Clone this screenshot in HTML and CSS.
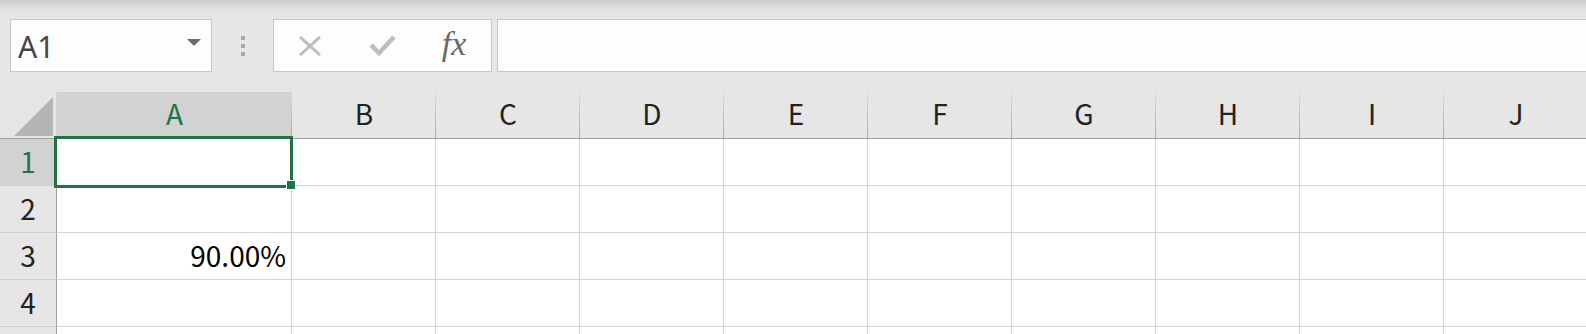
FILE: index.html
```html
<!DOCTYPE html>
<html lang="ja">

<head>
    <meta charset="UTF-8">
    <meta name="viewport" content="width=device-width, initial-scale=1.0">
    <title>Book1 - Excel</title>
    <link rel="stylesheet" href="styles.css">
</head>

<body>
    <div class="formula-row">
        <div class="name-box">
            <span class="name-text">A1</span>
            <span class="name-arrow"></span>
        </div>
        <div class="grip">
            <span></span>
            <span></span>
            <span></span>
        </div>
        <div class="func-box">
            <div class="func-btn">
                <svg width="24" height="20" viewBox="0 0 24 20">
                    <path d="M2 1 L22 19 M22 1 L2 19" stroke="#bdbdbd" stroke-width="3" fill="none" />
                </svg>
            </div>
            <div class="func-btn">
                <svg width="27" height="21" viewBox="0 0 27 21">
                    <path d="M2 10 L10 18 L25 2" stroke="#bdbdbd" stroke-width="4.5" fill="none" />
                </svg>
            </div>
            <div class="func-btn fx">fx</div>
        </div>
        <div class="formula-input"></div>
    </div>

    <div class="sheet">
        <div class="corner"><div class="corner-tri"></div></div>
        <div class="col-head active">A</div>
        <div class="col-head">B</div>
        <div class="col-head">C</div>
        <div class="col-head">D</div>
        <div class="col-head">E</div>
        <div class="col-head">F</div>
        <div class="col-head">G</div>
        <div class="col-head">H</div>
        <div class="col-head">I</div>
        <div class="col-head">J</div>

        <div class="row-head active">1</div>
        <div class="cell selected">
            <div class="selection"></div>
            <div class="fill-handle"></div>
        </div>
        <div class="cell"></div>
        <div class="cell"></div>
        <div class="cell"></div>
        <div class="cell"></div>
        <div class="cell"></div>
        <div class="cell"></div>
        <div class="cell"></div>
        <div class="cell"></div>
        <div class="cell"></div>

        <div class="row-head">2</div>
        <div class="cell"></div>
        <div class="cell"></div>
        <div class="cell"></div>
        <div class="cell"></div>
        <div class="cell"></div>
        <div class="cell"></div>
        <div class="cell"></div>
        <div class="cell"></div>
        <div class="cell"></div>
        <div class="cell"></div>

        <div class="row-head">3</div>
        <div class="cell number">90.00%</div>
        <div class="cell"></div>
        <div class="cell"></div>
        <div class="cell"></div>
        <div class="cell"></div>
        <div class="cell"></div>
        <div class="cell"></div>
        <div class="cell"></div>
        <div class="cell"></div>
        <div class="cell"></div>

        <div class="row-head">4</div>
        <div class="cell"></div>
        <div class="cell"></div>
        <div class="cell"></div>
        <div class="cell"></div>
        <div class="cell"></div>
        <div class="cell"></div>
        <div class="cell"></div>
        <div class="cell"></div>
        <div class="cell"></div>
        <div class="cell"></div>

        <!-- row 5 is only a sliver at the bottom of the window -->
        <div class="row-head"></div>
        <div class="cell"></div>
        <div class="cell"></div>
        <div class="cell"></div>
        <div class="cell"></div>
        <div class="cell"></div>
        <div class="cell"></div>
        <div class="cell"></div>
        <div class="cell"></div>
        <div class="cell"></div>
        <div class="cell"></div>
    </div>
</body>

</html>
```

FILE: styles.css
```css
body {
    margin: 0;
    overflow: hidden;
    height: 334px;
    background: linear-gradient(#cbcbcb 0, #e3e3e3 10px, #e6e6e6 20px);
    font-family: "Noto Sans CJK JP", "Noto Sans", sans-serif;
}

.formula-row {
    display: flex;
    align-items: stretch;
    height: 53px;
    padding: 19px 0 0 10px;
    margin-bottom: 20px;
}

.name-box {
    box-sizing: border-box;
    width: 202px;
    display: flex;
    align-items: center;
    justify-content: space-between;
    padding: 0 10px 0 7px;
    background-color: #fdfdfd;
    border: 1px solid #c6c6c6;
}

.name-text {
    font-family: "Noto Sans", sans-serif;
    font-size: 30px;
    color: #444;
    line-height: 1;
    padding-top: 3px;
}

.name-arrow {
    width: 0;
    height: 0;
    border-left: 7px solid transparent;
    border-right: 7px solid transparent;
    border-top: 7px solid #6b6b6b;
    margin-bottom: 6px;
}

.grip {
    display: flex;
    flex-direction: column;
    justify-content: center;
    gap: 4px;
    margin: 0 28px 0 29px;
}

.grip span {
    width: 4px;
    height: 4px;
    background-color: #a9a9a9;
}

.func-box {
    box-sizing: border-box;
    width: 219px;
    display: flex;
    background-color: #fdfdfd;
    border: 1px solid #c6c6c6;
}

.func-btn {
    width: 72px;
    display: flex;
    align-items: center;
    justify-content: center;
}

.func-btn.fx {
    font-family: "Liberation Serif", serif;
    font-style: italic;
    font-size: 34px;
    color: #666;
    padding-bottom: 4px;
}

.formula-input {
    flex: 1;
    margin-left: 5px;
    background-color: #fdfdfd;
    border: 1px solid #c6c6c6;
    border-right: none;
}

.sheet {
    display: grid;
    grid-template-columns: 57px 235px repeat(9, 144px);
    grid-auto-rows: 47px;
}

.corner,
.col-head,
.row-head,
.cell {
    box-sizing: border-box;
}

.corner {
    display: flex;
    align-items: flex-end;
    justify-content: flex-end;
    padding: 0 3px 2px 0;
    background-color: #e6e6e6;
    border-right: 1px solid #d4d4d4;
    border-bottom: 1px solid #9e9e9e;
}

.corner-tri {
    width: 39px;
    height: 39px;
    background-color: #b5b5b5;
    clip-path: polygon(100% 0, 100% 100%, 0 100%);
}

.col-head {
    display: flex;
    align-items: center;
    justify-content: center;
    padding-bottom: 4px;
    font-size: 28px;
    color: #222;
    background: linear-gradient(#dcdcdc, #a6a6a6) right / 1px 100% no-repeat, #e6e6e6;
    border-bottom: 1px solid #9e9e9e;
}

.col-head.active {
    background: linear-gradient(#dcdcdc, #a6a6a6) right / 1px 100% no-repeat, #d2d2d2;
    color: #217346;
}

.row-head {
    display: flex;
    align-items: center;
    justify-content: center;
    padding-bottom: 2px;
    font-size: 28px;
    color: #222;
    background-color: #e6e6e6;
    border-right: 1px solid #9e9e9e;
    border-bottom: 1px solid #cdcdcd;
}

.row-head.active {
    background-color: #d2d2d2;
    color: #217346;
}

.cell {
    background-color: #fff;
    border-right: 1px solid #d4d4d4;
    border-bottom: 1px solid #d4d4d4;
}

.cell.selected {
    position: relative;
}

.cell.number {
    display: flex;
    align-items: center;
    justify-content: flex-end;
    padding: 0 5px 2px 0;
    font-size: 28px;
    color: #000;
}

.selection {
    position: absolute;
    left: -3px;
    top: -3px;
    width: 239px;
    height: 52px;
    box-sizing: border-box;
    border: 3px solid #217346;
}

.fill-handle {
    position: absolute;
    left: 229px;
    top: 41px;
    width: 8px;
    height: 8px;
    background-color: #217346;
    border: 1px solid #fff;
}
```
